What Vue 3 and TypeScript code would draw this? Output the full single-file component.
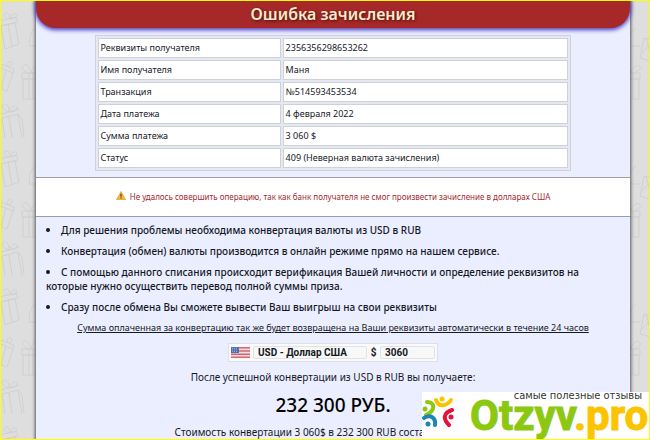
<script setup lang="ts">
import { ref } from 'vue'

interface Detail {
  label: string
  value: string
}

const details: Detail[] = [
  { label: 'Реквизиты получателя', value: '2356356298653262' },
  { label: 'Имя получателя', value: 'Маня' },
  { label: 'Транзакция', value: '№514593453534' },
  { label: 'Дата платежа', value: '4 февраля 2022' },
  { label: 'Сумма платежа', value: '3 060 $' },
  { label: 'Статус', value: '409 (Неверная валюта зачисления)' },
]

const notes: string[] = [
  'Для решения проблемы необходима конвертация валюты из USD в RUB',
  'Конвертация (обмен) валюты производится в онлайн режиме прямо на нашем сервисе.',
  'С помощью данного списания происходит верификация Вашей личности и определение реквизитов на которые нужно осуществить перевод полной суммы приза.',
  'Сразу после обмена Вы сможете вывести Ваш выигрыш на свои реквизиты',
]

const currency = ref('USD - Доллар США')
const amount = ref('3060')
</script>

<template>
  <div class="page">
    <svg class="wallpaper" aria-hidden="true">
      <defs>
        <pattern id="gifts" width="60" height="138" patternUnits="userSpaceOnUse">
          <g fill="none" stroke="#d0d0d0" stroke-width="1">
            <path d="M1 26 15 23 19 44 5 49zM0 26l-1-5 17-4 2 5zM8 24l4 22M9 19c-6-2-6-7-2-6 3 1 3 4 3 6 1-5 6-7 7-3 0 2-4 3-7 3" />
            <path d="M23 79h16v20H23zM22 73h18v6H22zM29 73v26M33 73v26M31 73c-7-1-11-5-7-8 4-2 6 4 7 8 1-6 7-10 9-6 2 3-5 6-9 6" />
            <path d="M1 68l12 5-6 18-9-3zM0 64l14 5-1 4M6 70l-5 19M7 66c0-5 5-6 5-2 0 2-3 3-5 2" />
            <path d="M2 118l16-4 4 24-16 7zM18 114l4 5 2 18M1 114l18-5M9 117l4 26M9 112c-7-2-9-8-4-8 3 0 4 4 4 8 2-6 8-8 8-4 0 3-4 4-8 4" />
            <path d="M30 45c-2-7 2-17 6-16M28 46h12M44 38l10 3-4 20-10-3zM46 38l6 22M42 53l9-10M52 86l12 2v20l-12-2z" />
          </g>
        </pattern>
      </defs>
      <rect width="100%" height="100%" fill="url(#gifts)" />
    </svg>

    <main class="panel">
      <h1 class="title">Ошибка зачисления</h1>

      <table class="details">
        <tbody>
          <tr v-for="row in details" :key="row.label">
            <th scope="row">{{ row.label }}</th>
            <td>{{ row.value }}</td>
          </tr>
        </tbody>
      </table>

      <p class="alert" role="alert">
        <svg class="warning" viewBox="0 0 20 18" aria-hidden="true">
          <path d="M10 1 19 17H1z" fill="#f4b73c" stroke="#e3a42e" stroke-width="1.5" stroke-linejoin="round" />
          <path d="M10 5.500v6M10 13.200v2" stroke="#55402a" stroke-width="2.400" />
        </svg>
        Не удалось совершить операцию, так как банк получателя не смог произвести зачисление в долларах США
      </p>

      <ul class="notes">
        <li v-for="note in notes" :key="note">{{ note }}</li>
      </ul>

      <p class="refund">
        Сумма оплаченная за конвертацию так же будет возвращена на Ваши реквизиты автоматически в течение 24 часов
      </p>

      <form class="converter" @submit.prevent>
        <svg class="flag" viewBox="0 0 19 11" aria-hidden="true">
          <rect width="19" height="11" fill="#f3dfe1" />
          <path d="M0 .8h19M0 4h19M0 7.200h19M0 10.300h19" stroke="#d9656c" stroke-width="1.600" />
          <rect width="8" height="6" fill="#4d74ac" />
          <path d="M1 1.500h6M1 3h6M1 4.500h6" stroke="#b9cae3" stroke-width=".6" stroke-dasharray="1 1" />
        </svg>
        <input v-model="currency" class="field currency" aria-label="Валюта" readonly />
        <label class="sign" for="amount">$</label>
        <input id="amount" v-model="amount" class="field amount" readonly />
      </form>

      <p class="result-label">После успешной конвертации из USD в RUB вы получаете:</p>
      <p class="result">232 300 РУБ.</p>
      <p class="cost">Стоимость конвертации 3 060$ в 232 300 RUB составляет 1 350 р.</p>
    </main>

    <aside class="badge">
      <svg class="people" viewBox="0 0 32 32" aria-hidden="true">
        <g fill="none" stroke-width="4" stroke-linecap="round">
          <path d="M5 6c8 0 9 8-1 13" stroke="#8cc811" />
          <path d="M14 4c3 8 11 6 15 0" stroke="#fcc400" />
          <path d="M2 22c7-4 12 0 11 7" stroke="#1c87b5" />
          <path d="M30 14c-9 3-9 9-3 15" stroke="#e4123c" />
        </g>
        <circle cx="3" cy="13" r="2.500" fill="#8cc811" />
        <circle cx="20" cy="3" r="2.500" fill="#fcc400" />
        <circle cx="6" cy="28" r="2.500" fill="#1c87b5" />
        <circle cx="29" cy="21" r="2.500" fill="#e4123c" />
      </svg>
      <div class="brand">
        <span class="tagline">самые полезные отзывы</span>
        <span class="name">Otzyv<span class="zone">.pro</span></span>
      </div>
    </aside>
  </div>
</template>

<style>
body {
  margin: 0;
}
</style>

<style scoped>
.page {
  position: relative;
  display: flex;
  box-sizing: border-box;
  min-height: 100vh;
  padding: 0 20px 0 36px;
  background: #dedede;
  color: #16181f;
  font-family: "Noto Sans", "Open Sans", sans-serif;
  overflow: hidden;
}

.page::after {
  content: "";
  position: absolute;
  inset: 0;
  border: 1px solid #ff0;
  pointer-events: none;
}

.wallpaper {
  position: absolute;
  inset: 0;
  width: 100%;
  height: 100%;
}

.panel {
  position: relative;
  flex: 1;
  min-width: 0;
  background: #ebeeff;
  box-shadow: 0 0 3px 1px #555;
}

.title {
  margin: 0;
  border-radius: 0 0 20px 20px;
  background: #a72828;
  box-shadow: 0 1px 4px 1px #4b3bc0;
  color: #f8ebcb;
  font-size: 16px;
  font-weight: 600;
  line-height: 28px;
  text-align: center;
  text-shadow: 1px 1px 3px #4a1010;
}

.details {
  width: 80%;
  margin: 7px auto 6px;
  border: 1px solid #ced0da;
  border-collapse: separate;
  border-spacing: 2px;
  background: #e6e8f2;
  font-size: 9px;
  line-height: 14px;
}

.details th,
.details td {
  padding: 2px;
  border: 1px solid #ced0da;
  background: #fff;
  font-weight: 400;
  text-align: left;
}

.details th {
  width: 39%;
  padding-left: 1px;
}

.alert {
  margin: 0;
  border: 1px solid #9a9ca8;
  border-width: 1px 0;
  background: #fff;
  color: #9f2a31;
  font-size: 8px;
  line-height: 38px;
  text-align: center;
}

.warning {
  width: 10px;
  height: 9px;
  margin-right: 2px;
}

.notes {
  margin: 0;
  padding: 6px 40px 0 10px;
  list-style: none;
  font-size: 10px;
  font-weight: 500;
  line-height: 14px;
}

.notes li {
  margin-bottom: 7px;
}

.notes li::before {
  content: "";
  display: inline-block;
  width: 4px;
  height: 4px;
  margin: 0 11px 2px 0;
  border-radius: 50%;
  background: #16181f;
}

.refund,
.result-label,
.result,
.cost {
  margin: 0;
  text-align: center;
}

.refund {
  font-size: 9px;
  line-height: 14px;
  text-decoration: underline;
}

.converter {
  display: flex;
  align-items: center;
  box-sizing: border-box;
  width: 210px;
  height: 19px;
  margin: 8px auto 7px;
  padding: 2px;
  border: 1px solid #dddfe2;
  background: #f9faf9;
  font-family: Roboto, sans-serif;
  font-size: 10px;
  font-weight: 700;
}

.flag {
  width: 19px;
  height: 11px;
}

.field {
  box-sizing: border-box;
  min-width: 0;
  height: 13px;
  padding: 0 4px;
  border: 1px solid #e0e2e4;
  border-radius: 2px;
  background: #f7f8f7;
  color: #16181f;
  font: inherit;
}

.currency {
  width: 114px;
  margin-left: 3px;
}

.sign {
  width: 13px;
  text-align: center;
}

.amount {
  flex: 1;
}

.result-label,
.cost {
  font-size: 10px;
  line-height: 16px;
}

.result {
  padding: 8px 0 7px;
  color: #000;
  font-size: 19px;
  font-weight: 500;
  line-height: 24px;
}

.badge {
  position: absolute;
  right: 1px;
  bottom: 1px;
  display: flex;
  width: 227px;
  height: 47px;
  background: #fff;
  overflow: hidden;
}

.people {
  flex: none;
  width: 32px;
  height: 32px;
  margin-top: 4px;
}

.brand {
  display: flex;
  flex-direction: column;
  flex: 1;
  min-width: 0;
  padding-left: 16px;
}

.tagline {
  padding-right: 7px;
  color: #333;
  font-family: "DejaVu Sans Condensed", "DejaVu Sans", sans-serif;
  font-size: 11px;
  line-height: 8px;
  text-align: right;
}

.name {
  color: #8cc811;
  font-family: Roboto, sans-serif;
  font-size: 42px;
  font-weight: 700;
  line-height: 32px;
  white-space: nowrap;
  -webkit-text-stroke: 1px currentColor;
}

.zone {
  color: #fcc400;
}
</style>
